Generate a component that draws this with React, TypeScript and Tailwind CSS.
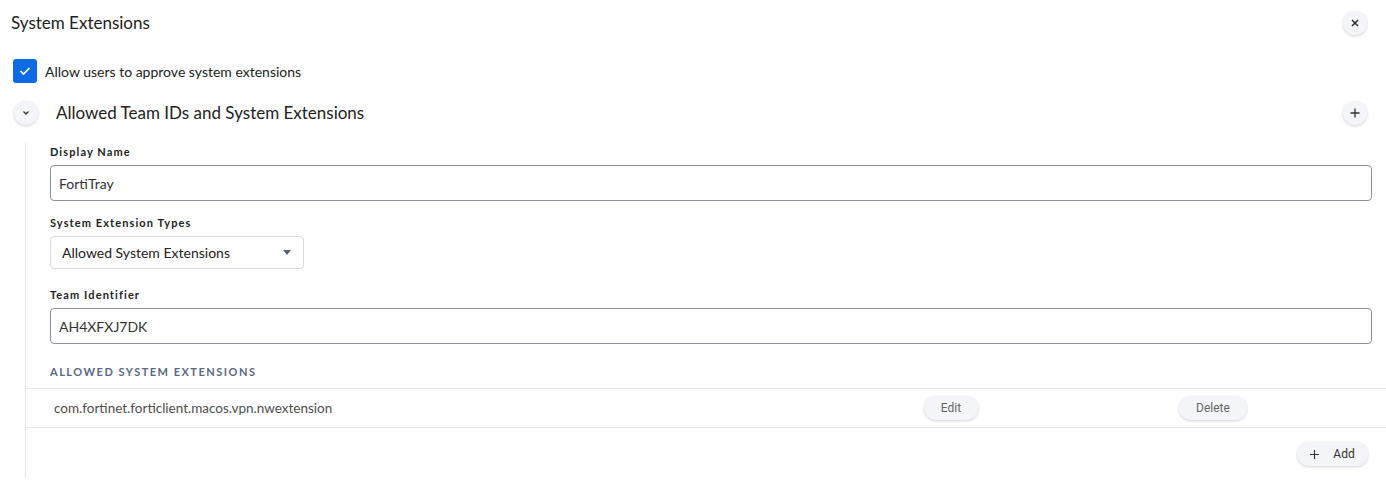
import React from "react";

const font = { fontFamily: "Lato, 'Liberation Sans', sans-serif" };

function CircleBtn({ children }: { children: React.ReactNode }) {
  return (
    <button className="w-6 h-6 rounded-full bg-[#f4f5f8] shadow-[0_1px_3px_rgba(0,0,0,0.18)] flex items-center justify-center text-[#333]">
      {children}
    </button>
  );
}

function PillBtn({ children, className = "" }: { children: React.ReactNode; className?: string }) {
  return (
    <button
      className={`h-6 rounded-full bg-[#f4f5f8] shadow-[0_1px_3px_rgba(0,0,0,0.18)] flex items-center justify-center text-[12px] ${className}`}
      style={{ fontFamily: "Roboto, sans-serif" }}
    >
      {children}
    </button>
  );
}

export default function App() {
  return (
    <div className="w-[1386px] h-[486px] bg-white text-[#1f1f1f] overflow-hidden" style={font}>
      <div className="flex items-center justify-between pl-[11px] pr-[19px] pt-[11px] h-[35px]">
        <h1 className="text-[17px] leading-[24px] text-[#222]">System Extensions</h1>
        <CircleBtn>
          <svg width="8" height="8" viewBox="0 0 8 8"><path d="M1 1L7 7M7 1L1 7" stroke="#333" strokeWidth="1.6" /></svg>
        </CircleBtn>
      </div>
      <div className="flex items-center pl-[13px] mt-[24px] h-6">
        <div className="w-6 h-6 rounded-[3px] bg-[#0f6be3] flex items-center justify-center">
          <svg width="12" height="10" viewBox="0 0 12 10"><path d="M1.5 5L4.5 8L10.5 2" stroke="white" strokeWidth="1.6" fill="none" /></svg>
        </div>
        <span className="ml-[8px] text-[14px] text-[#222]">Allow users to approve system extensions</span>
      </div>
      <div className="flex items-center justify-between pl-[14px] pr-[19px] mt-[18px] h-6">
        <div className="flex items-center">
          <CircleBtn>
            <svg width="8" height="6" viewBox="0 0 8 6"><path d="M1.5 1.5L4 4L6.5 1.5" stroke="#333" strokeWidth="1.3" fill="none" /></svg>
          </CircleBtn>
          <span className="ml-[18px] text-[17px] text-[#222]">Allowed Team IDs and System Extensions</span>
        </div>
        <CircleBtn>
          <svg width="10" height="10" viewBox="0 0 10 10"><path d="M5 0.5V9.5M0.5 5H9.5" stroke="#333" strokeWidth="1.3" /></svg>
        </CircleBtn>
      </div>
      <div className="ml-[25px] mt-[18px] border-l border-[#e6e8ec] h-[334px]">
        <div className="pl-[24px] pr-[14px] pt-[1px]">
          <label className="block text-[11px] font-bold tracking-[1.1px] text-[#222] leading-[16px]">Display Name</label>
          <div className="mt-[5px] h-9 border border-[#8b9099] rounded-[4px] flex items-center px-[8px] text-[14px] text-[#333]">FortiTray</div>
          <label className="block mt-[14px] text-[11px] font-bold tracking-[1.1px] text-[#222] leading-[16px]">System Extension Types</label>
          <div className="mt-[5px] w-[254px] h-[33px] border border-[#d8dbe0] rounded-[4px] flex items-center justify-between pl-[11px] pr-[12px] text-[14px] text-[#222]">
            <span>Allowed System Extensions</span>
            <svg width="8" height="5" viewBox="0 0 8 5"><path d="M0 0H8L4 5Z" fill="#5b6472" /></svg>
          </div>
          <label className="block mt-[18px] text-[11px] font-bold tracking-[1.1px] text-[#222] leading-[16px]">Team Identifier</label>
          <div className="mt-[5px] h-9 border border-[#8b9099] rounded-[4px] flex items-center px-[8px] text-[14px] text-[#333]">AH4XFXJ7DK</div>
          <div className="mt-[20px] text-[11px] font-bold tracking-[1.5px] text-[#5a6883] leading-[16px]">ALLOWED SYSTEM EXTENSIONS</div>
        </div>
        <div className="mt-[8px] border-t border-b border-[#e6e8ec] h-[40px] flex items-center">
          <span className="pl-[28px] w-[898px] text-[13.5px] text-[#4d4d4d]">com.fortinet.forticlient.macos.vpn.nwextension</span>
          <PillBtn className="w-[54px] text-[#666]">Edit</PillBtn>
          <div className="w-[201px]" />
          <PillBtn className="w-[68px] text-[#666]">Delete</PillBtn>
        </div>
        <div className="flex justify-end pr-[18px] mt-[14px]">
          <PillBtn className="w-[71px] text-[#333] gap-[14px]">
            <svg width="9" height="9" viewBox="0 0 9 9"><path d="M4.5 0V9M0 4.5H9" stroke="#333" strokeWidth="1.2" /></svg>
            <span>Add</span>
          </PillBtn>
        </div>
      </div>
    </div>
  );
}
